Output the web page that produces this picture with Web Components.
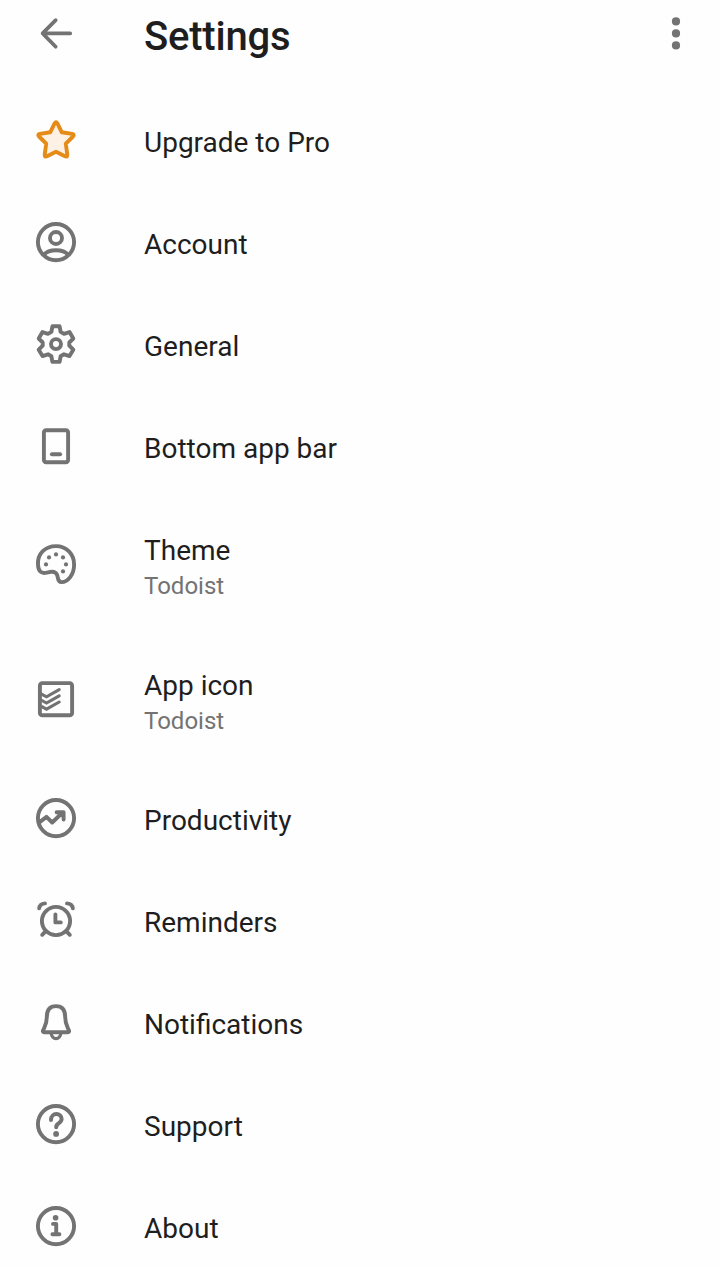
<!DOCTYPE html>
<html lang="en">
<head>
<meta charset="utf-8">
<title>Settings</title>
<style>
html,body{margin:0;background:#fefefe}
body{font-family:Roboto,"Liberation Sans",sans-serif;color:#1e1e1e}
</style>
</head>
<body>
<settings-page></settings-page>
<script>
const ring = '<circle cx="24" cy="24.1" r="18.1"/>';
const ICONS = {
  back: '<path d="M38.2 24.4H10.8M23.7 11.1 10.6 24.4l13.1 13.3" stroke-width="3.7"/>',
  more: '<g fill="currentColor" stroke="none"><circle cx="24" cy="12.4" r="4.1"/><circle cx="24" cy="24.4" r="4.1"/><circle cx="24" cy="36.4" r="4.1"/></g>',
  star: '<path fill="#fdf1e6" d="M22.6 7.4Q24 5 25.4 7.4L29.8 16.3 40.2 17.9Q42.8 18.5 41 20.5L33.8 27.7 35.3 38.6Q35.4 41.3 33 40.3L24 35.7 15 40.3Q12.6 41.3 12.7 38.6L14.2 27.7 7 20.5Q5.2 18.5 7.8 17.9L18.2 16.3Z"/>',
  account: ring + '<circle cx="24" cy="20" r="6"/><path d="M12 36.6Q15.5 32.2 24 32.2T36 36.6"/>',
  gear: '<circle cx="24" cy="24.1" r="5"/><path d="M20.4 6.3H27.6L28.6 11.9 32 13.9 37.5 12.1 41.3 18.5 37.3 22.5V25.7L41.3 29.7 37.5 36.1 32 34.3 28.6 36.3 27.6 41.9H20.4L19.4 36.3 16 34.3 10.5 36.1 6.7 29.7 10.7 25.7V22.5L6.7 18.5 10.5 12.1 16 13.9 19.4 11.9Z"/>',
  phone: '<rect x="11.9" y="8.3" width="24.2" height="32" rx="2.2"/><path d="M19.9 32.2h8.2"/>',
  palette: '<path d="M6 25C5.2 13.5 13.5 6.1 24 6.1S42.1 14.2 42.1 24.5C42.1 34.7 36 42.1 29.5 42.1C25 42.1 26.5 37.2 24.8 34.3C22.5 30.6 18.5 31.7 14.8 32.6C9 34.1 6.5 31.2 6 25Z"/><g fill="currentColor" stroke="none"><circle cx="14" cy="24.4" r="2.1"/><circle cx="17" cy="17.4" r="2.1"/><circle cx="24" cy="14.4" r="2.1"/><circle cx="31" cy="17.4" r="2.1"/><circle cx="34" cy="24.4" r="2.1"/><circle cx="31" cy="31.4" r="2.1"/></g>',
  app: '<rect x="7.9" y="8.1" width="32.2" height="32.2" rx="2.4"/><path stroke-width="3.1" stroke-linejoin="miter" d="M9 18.8 14.5 21.8 27.2 14.6M9 25 14.5 28 27.2 20.8M9 31.2 14.5 34.2 27.2 27"/>',
  chart: ring + '<path d="M7 28.6 14.5 22.9 20.2 28.5 30.6 18.5M24.6 18.2H31.6V25.6"/><path fill="currentColor" stroke="none" d="M26 18H32V24Z"/>',
  alarm: '<circle cx="24" cy="25" r="14.1"/><path d="M23.4 18.4V26.4H28.8M13.8 35.2 10.2 38.8M34.2 35.2 37.8 38.8M7.2 12.4Q7.6 8 13 7.4M40.8 12.4Q40.4 8 35 7.4"/>',
  bell: '<path d="M24 8.1C17 8.1 14.8 13.2 14.8 19.2C14.8 25.5 13.4 27.4 11.4 31.6Q10 34.3 12.4 34.3H35.6Q38 34.3 36.6 31.6C34.6 27.4 33.2 25.5 33.2 19.2C33.2 13.2 31 8.1 24 8.1Z"/><path d="M19 35Q20 40.6 24 40.6T29 35" stroke-width="3.2"/>',
  help: ring + '<path d="M19 19.9C19 12.3 29.6 12.2 29.6 19.1C29.6 23.6 24.2 22.8 24.2 27.2" stroke-width="4"/><circle cx="24.1" cy="33.9" r="2.9" fill="currentColor" stroke="none"/>',
  info: ring + '<path d="M21 21.9H24.2V32.2M20.4 32.3H27.4"/><circle cx="23.6" cy="15.8" r="2.8" fill="currentColor" stroke="none"/>'
};

customElements.define('line-icon', class extends HTMLElement {
  constructor(){
    super();
    this.attachShadow({mode:'open'}).innerHTML =
      `<style>:host{display:block;flex:none;width:48px;height:48px;color:#737373}:host([name=star]){color:#e58b17}svg{display:block}</style>
       <svg width="48" height="48" viewBox="0 0 48 48" fill="none" stroke="currentColor" stroke-width="3.9" stroke-linecap="round" stroke-linejoin="round" aria-hidden="true">${ICONS[this.getAttribute('name')]}</svg>`;
  }
});

customElements.define('settings-header', class extends HTMLElement {
  constructor(){
    super();
    this.attachShadow({mode:'open'}).innerHTML =
      `<style>:host{display:flex;box-sizing:border-box;height:89px;padding:9px 20px 0 32px;align-items:flex-start}
       h1{flex:1;margin:4px 0 0 64px;font-size:40px;line-height:48px;font-weight:500;letter-spacing:-.2px}</style>
       <line-icon name="back"></line-icon><h1><slot></slot></h1><line-icon name="more"></line-icon>`;
  }
});

customElements.define('settings-row', class extends HTMLElement {
  constructor(){
    super();
    this.attachShadow({mode:'open'}).innerHTML =
      `<style>:host{display:flex;box-sizing:border-box;height:102px;padding:0 32px;align-items:center;gap:64px}
       :host([double]){height:135px}
       .text{display:flex;flex-direction:column;padding-top:5px;font-size:28px;line-height:36px;white-space:nowrap}
       :host([double]) .text{padding-top:6px}
       :host([double]) line-icon{margin-bottom:1px}
       ::slotted([slot=summary]){font-size:24px;line-height:34px;color:#737373}</style>
       <line-icon name="${this.getAttribute('icon')}"></line-icon>
       <div class="text"><span><slot></slot></span><slot name="summary"></slot></div>`;
  }
});

customElements.define('settings-page', class extends HTMLElement {
  constructor(){
    super();
    this.attachShadow({mode:'open'}).innerHTML =
      `<style>:host{display:block;height:1267px;overflow:hidden}</style>
       <settings-header>Settings</settings-header>
       <settings-row icon="star">Upgrade to Pro</settings-row>
       <settings-row icon="account">Account</settings-row>
       <settings-row icon="gear">General</settings-row>
       <settings-row icon="phone">Bottom app bar</settings-row>
       <settings-row icon="palette" double>Theme<span slot="summary">Todoist</span></settings-row>
       <settings-row icon="app" double>App icon<span slot="summary">Todoist</span></settings-row>
       <settings-row icon="chart">Productivity</settings-row>
       <settings-row icon="alarm">Reminders</settings-row>
       <settings-row icon="bell">Notifications</settings-row>
       <settings-row icon="help">Support</settings-row>
       <settings-row icon="info">About</settings-row>`;
  }
});
</script>
</body>
</html>
